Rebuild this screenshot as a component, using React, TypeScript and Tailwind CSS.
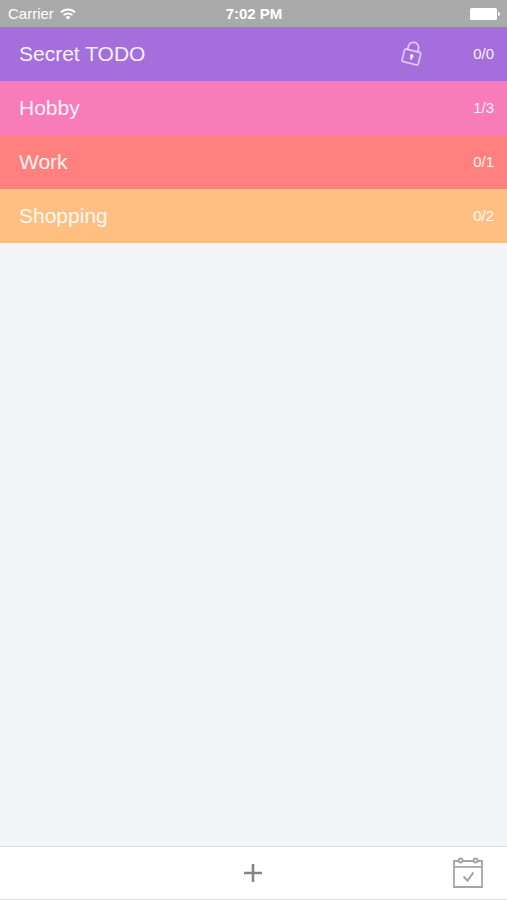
import React from 'react';

type TodoList = {
  name: string;
  count: string;
  color: string;
  locked?: boolean;
};

const lists: TodoList[] = [
  { name: 'Secret TODO', count: '0/0', color: 'bg-[#a56edd]', locked: true },
  { name: 'Hobby', count: '1/3', color: 'bg-[#f87bba]' },
  { name: 'Work', count: '0/1', color: 'bg-[#ff807f]' },
  { name: 'Shopping', count: '0/2', color: 'bg-[#ffbf80]' },
];

const WifiIcon = () => (
  <svg width="16" height="12" viewBox="0 0 16 12" fill="none" stroke="white" strokeWidth="1.9" aria-hidden="true">
    <path d="M1 4.4a10 10 0 0 1 14 0" />
    <path d="M3.7 7.2a6.1 6.1 0 0 1 8.6 0" />
    <path d="M8 11.6 5.7 9.2a3.3 3.3 0 0 1 4.6 0Z" fill="white" stroke="none" />
  </svg>
);

const BatteryIcon = () => (
  <svg width="30" height="12" viewBox="0 0 30 12" fill="white" aria-hidden="true">
    <rect x="0" y="0" width="27" height="12" rx="1.5" />
    <path d="M28 4c1.3.3 2 1 2 2s-.7 1.7-2 2Z" />
  </svg>
);

const LockIcon = () => (
  <svg width="22" height="26" viewBox="0 0 22 26" fill="none" stroke="white" strokeOpacity="0.62" strokeWidth="1.8" aria-hidden="true">
    <g transform="rotate(14 11 14)">
      <rect x="2.6" y="9.6" width="16.6" height="13" rx="1.5" />
      <path d="M5.4 9.6V6.4a5.2 5.2 0 0 1 10.4 0v3.2" />
      <circle cx="11" cy="15" r="1.7" fill="white" stroke="none" />
      <path d="M11 15v3.6" stroke="white" strokeOpacity="1" />
    </g>
  </svg>
);

const PlusIcon = () => (
  <svg width="20" height="20" viewBox="0 0 20 20" fill="none" stroke="#858585" strokeWidth="2.6" aria-hidden="true">
    <path d="M10 1v18M1 10h18" />
  </svg>
);

const CalendarIcon = () => (
  <svg width="32" height="32" viewBox="0 0 32 32" fill="none" stroke="#a6a6a6" strokeWidth="1.8" aria-hidden="true">
    <path d="M6 4H2v26h28V4h-4M11 4h10.500M2 9.8h28" />
    <circle cx="8.6" cy="3.5" r="2" strokeWidth="2" />
    <circle cx="23.6" cy="3.5" r="2" strokeWidth="2" />
    <path d="M11.5 19.500l4 4.200 6-8.400" strokeWidth="2" />
  </svg>
);

const App = () => {
  return (
    <div className="flex min-h-screen flex-col bg-[#f2f4f7] font-['Liberation_Sans',sans-serif]">
      <header className="grid h-[27px] shrink-0 grid-cols-3 items-center bg-[#aaaaaa] pr-[7px] pl-2 text-[15px] leading-5 text-white">
        <div className="flex items-center gap-1.5">
          <span>Carrier</span>
          <WifiIcon />
        </div>
        <span className="text-center font-bold">7:02 PM</span>
        <div className="flex justify-end">
          <BatteryIcon />
        </div>
      </header>

      <main className="flex-1">
        <ul>
          {lists.map((list) => (
            <li key={list.name}>
              <button
                type="button"
                className={`flex h-[54px] w-full items-center pr-[13px] pl-[19px] text-left text-white/90 ${list.color}`}
              >
                <span className="flex-1 text-[21px]">{list.name}</span>
                {list.locked && <LockIcon />}
                <span className="w-[71px] text-right text-[15px]">{list.count}</span>
              </button>
            </li>
          ))}
        </ul>
      </main>

      <footer className="grid h-[54px] shrink-0 grid-cols-3 items-center border-y border-[#dcdddf] bg-white px-[23px]">
        <button type="button" aria-label="Add list" className="col-start-2 justify-self-center">
          <PlusIcon />
        </button>
        <button type="button" aria-label="Calendar" className="justify-self-end">
          <CalendarIcon />
        </button>
      </footer>
    </div>
  );
};

export default App;
